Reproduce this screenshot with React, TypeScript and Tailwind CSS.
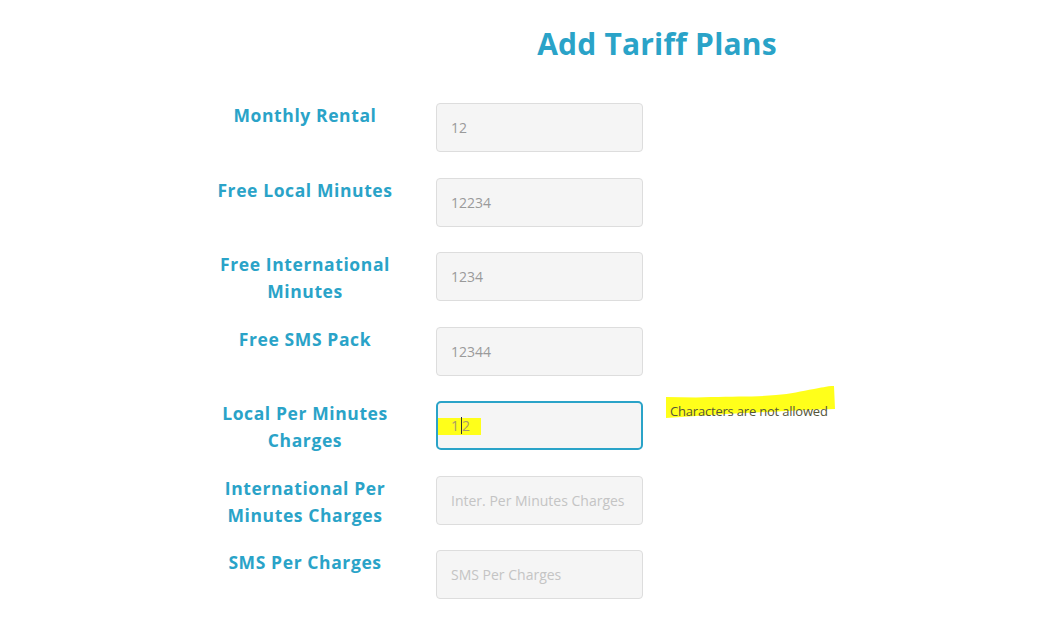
import React from 'react';

const labelFont = { fontFamily: '"Open Sans", "Liberation Sans", sans-serif' };

type Row = { label: string; value?: string; placeholder?: string; focused?: boolean };

const rows: Row[] = [
  { label: 'Monthly Rental', value: '12' },
  { label: 'Free Local Minutes', value: '12234' },
  { label: 'Free International Minutes', value: '1234' },
  { label: 'Free SMS Pack', value: '12344' },
  { label: 'Local Per Minutes Charges', focused: true },
  { label: 'International Per Minutes Charges', placeholder: 'Inter. Per Minutes Charges' },
  { label: 'SMS Per Charges', placeholder: 'SMS Per Charges' },
];

// marker stroke drawn behind the validation message
const Highlight: React.FC = () => (
  <svg className="absolute left-[-4px] top-[-13px]" width="170" height="36" viewBox="0 0 170 36">
    <path
      d="M0 12 C15 12 30 13 45 12 C70 11 90 12 110 10 C125 9 135 6 148 4 C155 3 160 1 168 1 L169 24 C140 25 100 27 60 29 C40 30 20 32 0 33 Z"
      fill="#ffff1a"
    />
  </svg>
);

const App: React.FC = () => {
  return (
    <div className="min-h-screen w-[1046px] bg-white" style={labelFont}>
      {/* Title */}
      <div className="ml-[268px] pt-[24px] text-center">
        <h1 className="text-[30px] leading-[40px] font-bold text-[#2aa3c8] tracking-[0.2px]">Add Tariff Plans</h1>
      </div>

      {/* Form */}
      <div className="mt-[39px] flex flex-col gap-[26.5px] pl-[195px]">
        {rows.map((row) => (
          <div key={row.label} className="flex h-[48px] items-start">
            <div className="-mt-[1px] w-[220px] text-center text-[17.5px] leading-[27px] font-bold tracking-[0.6px] text-[#2aa3c8]">
              {row.label}
            </div>
            <div className="ml-[21px] w-[207px]">
              {row.focused ? (
                <div className="relative flex h-[49px] items-center rounded-[5px] border-2 border-[#2aa3c8] bg-[#f5f5f5]">
                  <div className="absolute left-0 top-[15px] h-[17px] w-[43px] bg-[#ffff1a]" />
                  <span className="relative ml-[13px] text-[14px] text-[#a89a6a]">1</span>
                  <span className="relative ml-[2px] h-[17px] w-px bg-[#333]" />
                  <span className="relative text-[14px] text-[#a89a6a]">2</span>
                </div>
              ) : (
                <input
                  readOnly
                  value={row.value ?? ''}
                  placeholder={row.placeholder}
                  className="h-[49px] w-full rounded-[4px] border border-[#dddddd] bg-[#f5f5f5] px-[14px] text-[14px] text-[#9a9a9a] outline-none placeholder:text-[#c4c4c4]"
                />
              )}
            </div>
            {row.focused && (
              <div className="relative ml-[27px] -mt-[3px]">
                <Highlight />
                <span className="relative text-[13px] leading-[18px] tracking-[-0.2px] text-[#55553a]">Characters are not allowed</span>
              </div>
            )}
          </div>
        ))}
      </div>
    </div>
  );
};

export default App;
